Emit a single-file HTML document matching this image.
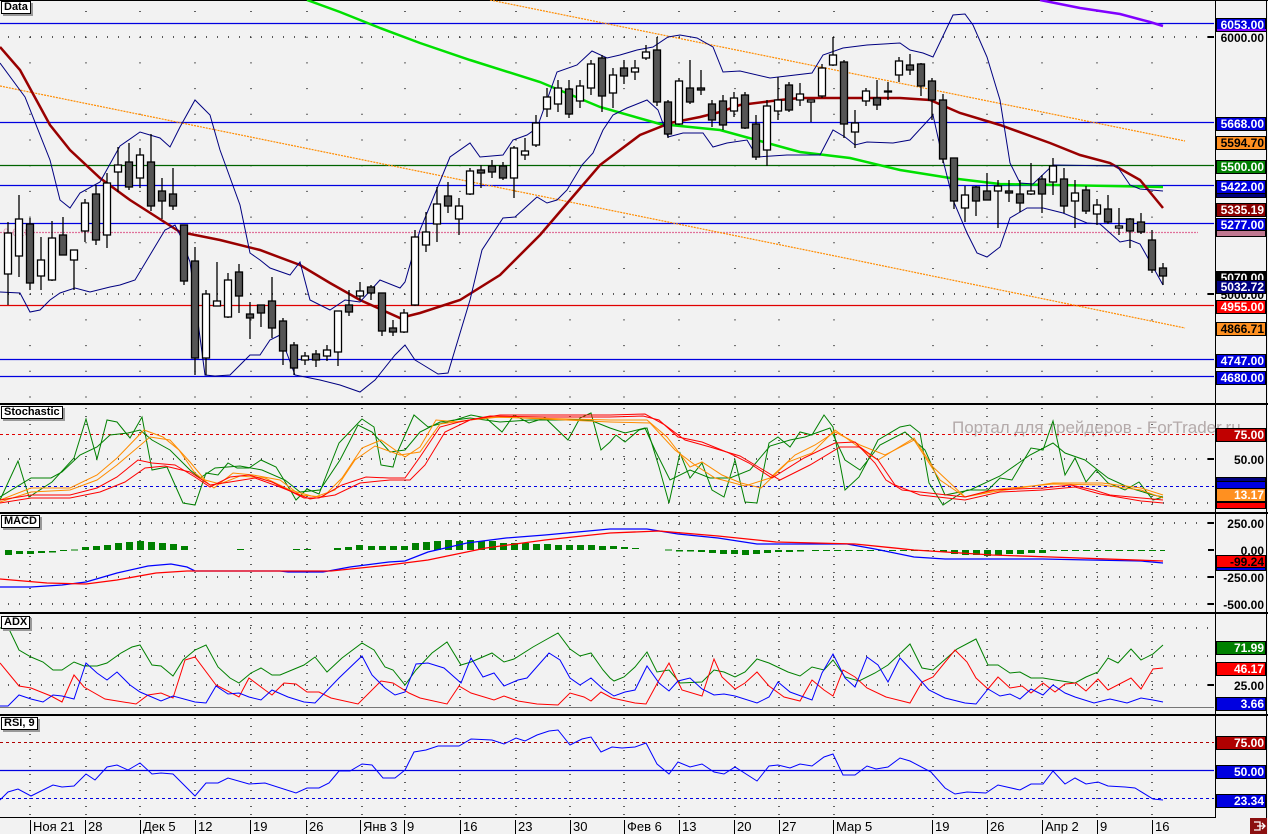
<!DOCTYPE html>
<html><head><meta charset="utf-8"><style>
body{margin:0;background:#f2f2f2;}
#w{position:relative;width:1268px;height:834px;overflow:hidden;background:#f2f2f2;font-family:"Liberation Sans",sans-serif;}
.t{position:absolute;left:1px;background:#fff;border:1px solid #000;box-shadow:2px 2px 0 #999;font:bold 11px "Liberation Sans",sans-serif;padding:0 2px;line-height:11px;}
.l{position:absolute;left:1216px;width:47px;height:12px;border:1px solid #000;font:bold 12px "Liberation Sans",sans-serif;line-height:12px;text-align:right;padding-right:1px;color:#fff;}
.n{border-color:transparent;color:#000;background:transparent;}
.d{position:absolute;top:820px;font:13px "Liberation Sans",sans-serif;line-height:14px;border-left:1px solid #000;padding-left:2px;}
</style></head><body><div id="w">
<svg width="1268" height="834" style="position:absolute;left:0;top:0">
<defs><clipPath id="cm"><rect x="0" y="0" width="1214" height="403"/></clipPath></defs>
<!-- frames -->
<line x1="0" y1="0.5" x2="1268" y2="0.5" stroke="#000"/>
<line x1="1215.5" y1="0" x2="1215.5" y2="818" stroke="#000"/>
<line x1="1266.5" y1="0" x2="1266.5" y2="818" stroke="#000"/>
<rect x="0" y="403" width="1268" height="2" fill="#000"/>
<rect x="0" y="512" width="1268" height="2" fill="#000"/>
<rect x="0" y="612" width="1268" height="2" fill="#000"/>
<rect x="0" y="714" width="1268" height="2" fill="#000"/>
<rect x="0" y="817" width="1216" height="1" fill="#000"/>
<!-- dotted grid -->
<g stroke="#000" stroke-width="1.2" stroke-dasharray="1 24.7">
<path d="M30 11V403M86 11V403M140 11V403M195 11V403M251 11V403M307 11V403M362 11V403M405 11V403M460 11V403M516 11V403M570 11V403M624 11V403M679 11V403M735 11V403M779 11V403M834 11V403M933 11V403M987 11V403M1042 11V403M1097 11V403M1152 11V403"/>
</g>
<g stroke="#000" stroke-width="1.2" stroke-dasharray="1 7">
<path d="M30 408V512M86 408V512M140 408V512M195 408V512M251 408V512M307 408V512M362 408V512M405 408V512M460 408V512M516 408V512M570 408V512M624 408V512M679 408V512M735 408V512M779 408V512M834 408V512M933 408V512M987 408V512M1042 408V512M1097 408V512M1152 408V512"/>
<path d="M30 516V612M86 516V612M140 516V612M195 516V612M251 516V612M307 516V612M362 516V612M405 516V612M460 516V612M516 516V612M570 516V612M624 516V612M679 516V612M735 516V612M779 516V612M834 516V612M933 516V612M987 516V612M1042 516V612M1097 516V612M1152 516V612"/>
<path d="M30 617V712M86 617V712M140 617V712M195 617V712M251 617V712M307 617V712M362 617V712M405 617V712M460 617V712M516 617V712M570 617V712M624 617V712M679 617V712M735 617V712M779 617V712M834 617V712M933 617V712M987 617V712M1042 617V712M1097 617V712M1152 617V712"/>
<path d="M30 718V817M86 718V817M140 718V817M195 718V817M251 718V817M307 718V817M362 718V817M405 718V817M460 718V817M516 718V817M570 718V817M624 718V817M679 718V817M735 718V817M779 718V817M834 718V817M933 718V817M987 718V817M1042 718V817M1097 718V817M1152 718V817"/>
</g>
<g stroke="#000" stroke-width="1.2" stroke-dasharray="1 10">
<path d="M8 37H1210M8 294H1210M8 459H1210M8 503H1210M8 523H1210M8 577H1210M8 604H1210M8 628H1210M8 656H1210M8 685H1210"/>
</g>
<g clip-path="url(#cm)">
<!-- horizontal levels -->
<g stroke-width="1.2" fill="none">
<path d="M0 23.5H1214M0 122.5H1214M0 185.5H1214M0 223.5H1214M0 359.5H1214M0 376.5H1214" stroke="#0000e0"/>
<path d="M0 165.5H1214" stroke="#006400"/>
<path d="M0 305.5H1214" stroke="#e00000"/>
<path d="M0 232.5H1198" stroke="#e0709a" stroke-dasharray="2 1"/>
<path d="M0 86L840 257L1185 328M490 0L1185 141" stroke="#ff8c00" stroke-dasharray="2 1"/>
</g>
<text x="3" y="236" font-size="11" fill="#e8a0b8" font-family="Liberation Sans">0.618</text>
<!-- MAs -->
<polyline fill="none" stroke="#8000ff" stroke-width="2.5" points="1040,0 1080,8 1120,14 1150,22 1163,26"/>
<polyline fill="none" stroke="#00e000" stroke-width="2.5" points="307,0 340,12 380,28 420,43 470,60 540,82 600,107 660,124 720,130 800,152 850,158 900,170 950,178 1000,184 1163,187"/>
<polyline fill="none" stroke="#990000" stroke-width="2.5" points="0,47 20,70 50,125 70,150 100,178 130,200 180,232 220,240 260,250 300,265 330,283 360,300 400,318 420,313 460,300 500,275 540,235 570,200 600,165 640,135 670,123 700,117 720,112 740,105 780,100 800,98 840,98 900,98 930,100 960,113 1000,125 1050,143 1080,155 1110,163 1140,180 1163,208"/>
<polyline fill="none" stroke="#000080" stroke-width="1" points="0,63 25,97 50,160 60,200 70,208 80,193 100,182 120,146 140,132 160,138 170,147 180,127 195,100 210,115 220,150 240,205 250,253 260,260 270,268 290,275 300,262 310,300 330,310 345,300 360,302 380,280 400,288 405,282 420,230 450,157 470,143 480,157 503,155 513,140 527,135 537,128 557,72 577,65 592,51 607,58 620,55 637,50 653,47 668,37 680,35 697,38 713,47 723,72 740,71 770,78 812,73 823,55 843,48 867,45 900,43 910,50 923,53 933,57 953,15 965,14 973,25 987,57 1000,100 1010,163 1020,183 1033,184 1053,165 1117,166 1130,185 1140,189 1163,191"/>
<polyline fill="none" stroke="#000080" stroke-width="1" points="0,292 20,293 30,312 40,310 50,300 60,293 75,288 90,292 110,287 120,285 135,280 150,255 165,230 175,225 180,235 190,262 205,375 215,376 230,375 240,365 250,355 260,355 270,340 280,335 295,375 320,380 340,385 360,392 375,380 395,355 405,345 415,360 420,363 438,374 448,373 470,300 482,250 503,218 515,217 537,197 547,203 557,200 567,190 582,165 593,153 603,130 613,115 627,108 647,100 658,110 668,137 683,133 703,133 713,147 727,143 747,140 757,157 787,155 820,155 833,130 845,137 855,145 867,142 893,143 910,140 933,115 943,160 953,200 967,233 977,253 987,257 1000,247 1010,218 1027,208 1043,208 1063,213 1087,223 1100,224 1120,242 1130,240 1140,244 1153,267 1163,285"/>
<!-- candles -->
<path stroke="#000" stroke-width="1.3" fill="none" d="M8 222V305M19 195V277M30 218V290M41 237V290M52 221V281M63 217V255M74 250V290M85 199V242M96 185V245M107 173V248M118 147V192M129 143V190M140 148V188M151 134V211M162 178V219M173 168V210M184 225V285M195 247V375M206 290V375M217 262V306M228 273V318M239 264V313M250 302V339M261 305V327M272 277V338M283 318V365M294 342V375M305 352V365M316 350V367M327 345V361M338 311V366M349 290V316M360 282V300M371 285V300M382 293V336M393 320V336M404 309V333M415 230V306M426 212V252M437 187V242M448 182V213M459 198V235M470 168V195M481 165V188M492 160V178M503 162V180M514 146V198M525 138V160M536 115V147M547 88V117M558 80V112M569 80V118M580 80V108M591 60V95M602 55V112M613 68V108M624 60V84M635 60V80M646 45V60M657 37V106M668 100V138M679 78V125M690 60V104M701 70V95M712 100V127M723 95V130M734 92V117M745 92V129M756 115V160M767 100V166M778 77V120M789 82V112M800 83V106M811 100V122M822 64V98M833 37V66M844 60V138M855 110V148M866 88V106M877 80V110M888 82V100M899 57V82M910 54V75M921 63V96M932 78V120M943 94V163M954 158V209M965 186V222M976 186V216M987 173V200M998 180V228M1009 180V202M1020 180V212M1031 163V195M1042 175V213M1053 158V195M1064 168V213M1075 180V228M1086 186V214M1097 199V225M1108 195V224M1119 208V235M1130 218V248M1141 213V234M1152 230V273M1163 263V285"/>
<g stroke="#000" stroke-width="1.3" fill="#fff">
<rect x="4.5" y="233" width="7" height="41"/><rect x="15.5" y="219" width="7" height="37"/><rect x="37.5" y="260" width="7" height="16"/><rect x="48.5" y="238" width="7" height="42"/><rect x="70.5" y="250" width="7" height="10"/><rect x="81.5" y="203" width="7" height="28"/><rect x="103.5" y="183" width="7" height="52"/><rect x="114.5" y="165" width="7" height="7"/><rect x="136.5" y="155" width="7" height="23"/><rect x="202.5" y="294" width="7" height="64"/><rect x="213.5" y="301" width="7" height="5"/><rect x="224.5" y="280" width="7" height="37"/><rect x="301.5" y="356" width="7" height="4"/><rect x="323.5" y="350" width="7" height="6"/><rect x="334.5" y="311" width="7" height="41"/><rect x="356.5" y="291" width="7" height="5"/><rect x="400.5" y="313" width="7" height="19"/><rect x="411.5" y="237" width="7" height="68"/><rect x="422.5" y="232" width="7" height="13"/><rect x="433.5" y="204" width="7" height="20"/><rect x="455.5" y="206" width="7" height="13"/><rect x="466.5" y="171" width="7" height="23"/><rect x="510.5" y="148" width="7" height="30"/><rect x="521.5" y="151" width="7" height="4"/><rect x="532.5" y="123" width="7" height="22"/><rect x="543.5" y="97" width="7" height="12"/><rect x="554.5" y="88" width="7" height="16"/><rect x="576.5" y="86" width="7" height="15"/><rect x="587.5" y="64" width="7" height="24"/><rect x="609.5" y="75" width="7" height="18"/><rect x="631.5" y="68" width="7" height="4"/><rect x="642.5" y="52" width="7" height="6"/><rect x="675.5" y="81" width="7" height="43"/><rect x="730.5" y="98" width="7" height="13"/><rect x="763.5" y="106" width="7" height="44"/><rect x="774.5" y="100" width="7" height="11"/><rect x="796.5" y="94" width="7" height="6"/><rect x="807.5" y="100" width="7" height="2"/><rect x="818.5" y="68" width="7" height="28"/><rect x="829.5" y="55" width="7" height="10"/><rect x="851.5" y="123" width="7" height="9"/><rect x="862.5" y="91" width="7" height="10"/><rect x="895.5" y="61" width="7" height="14"/><rect x="961.5" y="195" width="7" height="13"/><rect x="994.5" y="186" width="7" height="5"/><rect x="1027.5" y="191" width="7" height="3"/><rect x="1049.5" y="166" width="7" height="16"/><rect x="1071.5" y="193" width="7" height="8"/><rect x="1093.5" y="205" width="7" height="9"/><rect x="1115.5" y="226" width="7" height="2"/>
</g>
<g stroke="#000" stroke-width="1.3" fill="#555">
<rect x="26.5" y="224" width="7" height="59"/><rect x="59.5" y="235" width="7" height="20"/><rect x="92.5" y="194" width="7" height="46"/><rect x="125.5" y="162" width="7" height="25"/><rect x="147.5" y="162" width="7" height="44"/><rect x="158.5" y="191" width="7" height="10"/><rect x="169.5" y="194" width="7" height="12"/><rect x="180.5" y="225" width="7" height="56"/><rect x="191.5" y="261" width="7" height="97"/><rect x="235.5" y="272" width="7" height="24"/><rect x="246.5" y="314" width="7" height="4"/><rect x="257.5" y="305" width="7" height="8"/><rect x="268.5" y="301" width="7" height="27"/><rect x="279.5" y="321" width="7" height="30"/><rect x="290.5" y="345" width="7" height="23"/><rect x="312.5" y="354" width="7" height="6"/><rect x="345.5" y="305" width="7" height="7"/><rect x="367.5" y="287" width="7" height="6"/><rect x="378.5" y="293" width="7" height="38"/><rect x="389.5" y="328" width="7" height="4"/><rect x="444.5" y="196" width="7" height="10"/><rect x="477.5" y="170" width="7" height="3"/><rect x="488.5" y="166" width="7" height="6"/><rect x="499.5" y="166" width="7" height="12"/><rect x="565.5" y="89" width="7" height="25"/><rect x="598.5" y="58" width="7" height="38"/><rect x="620.5" y="68" width="7" height="8"/><rect x="653.5" y="50" width="7" height="52"/><rect x="664.5" y="102" width="7" height="32"/><rect x="686.5" y="88" width="7" height="14"/><rect x="697.5" y="88" width="7" height="2"/><rect x="708.5" y="104" width="7" height="16"/><rect x="719.5" y="101" width="7" height="24"/><rect x="741.5" y="95" width="7" height="33"/><rect x="752.5" y="124" width="7" height="33"/><rect x="785.5" y="85" width="7" height="25"/><rect x="840.5" y="62" width="7" height="62"/><rect x="873.5" y="98" width="7" height="7"/><rect x="884.5" y="91" width="7" height="1"/><rect x="906.5" y="65" width="7" height="5"/><rect x="917.5" y="64" width="7" height="22"/><rect x="928.5" y="81" width="7" height="19"/><rect x="939.5" y="100" width="7" height="59"/><rect x="950.5" y="158" width="7" height="43"/><rect x="972.5" y="187" width="7" height="14"/><rect x="983.5" y="191" width="7" height="9"/><rect x="1005.5" y="191" width="7" height="2"/><rect x="1016.5" y="194" width="7" height="9"/><rect x="1038.5" y="179" width="7" height="15"/><rect x="1060.5" y="179" width="7" height="27"/><rect x="1082.5" y="190" width="7" height="21"/><rect x="1104.5" y="209" width="7" height="13"/><rect x="1126.5" y="219" width="7" height="12"/><rect x="1137.5" y="222" width="7" height="10"/><rect x="1148.5" y="240" width="7" height="30"/><rect x="1159.5" y="268" width="7" height="8"/>
</g>
</g>
<!-- Stochastic -->
<text x="952" y="433" font-size="17" fill="#b4aaaa" font-family="Liberation Sans">Портал для трейдеров - ForTrader.ru</text>
<path d="M0 434.5H1214" stroke="#e00000" stroke-dasharray="3 3"/>
<path d="M0 486.5H1214" stroke="#0000e0" stroke-dasharray="3 3"/>
<g fill="none" stroke-width="1">
<polyline stroke="#008000" points="0,500 18,461 29,497 52,482 74,458 86,419 97,459 107,420 117,422 130,438 142,417 152,470 167,467 183,503 195,505 206,473 218,475 228,463 237,468 249,468 261,460 276,467 292,493 296,500 307,489 319,494 339,443 362,419 374,427 381,465 393,467 397,453 414,415 428,427 455,420 471,415 486,418 502,432 514,415 529,423 545,418 568,440 580,418 591,413 601,450 610,442 616,435 625,442 639,430 647,428 659,467 669,503 680,453 690,478 702,463 712,490 724,497 735,460 745,502 757,503 769,443 778,437 790,447 800,432 812,435 824,415 833,427 845,490 859,477 867,462 878,440 900,427 910,425 920,433 929,483 943,505 955,497 967,490 988,490 1000,478 1012,480 1031,448 1043,450 1053,421 1065,475 1075,458 1086,482 1096,470 1108,483 1125,490 1139,482 1153,500 1163,497"/>
<polyline stroke="#008000" points="0,497 31,478 51,478 62,472 80,455 97,447 110,435 128,433 140,430 152,440 170,450 190,470 200,478 215,468 240,466 262,470 285,480 300,492 320,490 340,460 358,425 372,432 390,452 405,450 420,432 440,422 470,418 500,422 530,420 560,420 590,420 610,428 625,433 645,428 655,450 670,480 690,470 710,478 730,478 750,470 770,446 790,440 805,437 830,428 845,460 860,470 880,445 905,432 925,450 945,495 970,490 1000,476 1030,455 1053,443 1065,453 1085,460 1108,478 1130,488 1153,495 1163,497"/>
<polyline stroke="#ff8c00" points="0,500 31,488 70,488 97,475 117,458 144,430 163,437 179,450 195,473 214,488 233,473 253,475 280,480 300,495 323,497 342,478 362,448 381,440 405,457 420,447 436,420 459,422 486,417 610,420 647,420 667,437 690,467 702,462 722,475 741,483 761,488 788,462 812,453 835,430 867,453 878,460 914,438 933,467 965,497 992,492 1053,483 1102,483 1141,488 1163,495"/>
<polyline stroke="#ff8c00" points="0,502 31,492 70,490 97,480 117,465 150,437 170,440 190,462 205,480 220,484 240,476 265,478 290,490 315,497 335,490 355,460 375,446 400,455 420,452 440,424 470,420 500,417 610,422 650,423 675,450 695,465 715,478 745,486 770,478 795,455 815,445 835,432 860,445 885,455 914,440 940,480 965,497 1000,489 1053,484 1102,485 1141,490 1163,498"/>
<polyline stroke="#ff0000" points="0,500 31,495 70,495 97,488 117,477 138,460 152,463 175,465 195,477 210,487 230,477 249,475 272,482 304,498 319,498 342,485 366,477 389,478 405,478 420,457 440,427 459,422 490,416 545,417 610,417 643,416 659,420 678,437 702,442 729,453 749,463 772,478 804,458 835,443 855,442 875,463 886,480 902,490 965,497 992,490 1043,488 1071,485 1094,490 1110,495 1141,498 1163,500"/>
<polyline stroke="#ff0000" points="0,503 31,498 70,498 100,492 125,482 145,468 165,466 190,472 210,485 230,482 255,478 280,487 310,499 335,495 360,483 390,480 410,480 425,465 445,432 470,420 500,415 610,415 645,414 665,425 685,440 710,447 740,456 760,468 780,480 810,465 840,447 860,447 878,460 895,485 920,495 965,500 1000,492 1043,490 1075,487 1100,494 1141,501 1163,503"/>
</g>
<!-- MACD -->
<g fill="#008000">
<rect x="5" y="550" width="7" height="5"/><rect x="16" y="551" width="7" height="3"/><rect x="27" y="551" width="7" height="3"/><rect x="38" y="551" width="7" height="2"/><rect x="49" y="551" width="7" height="1.5"/><rect x="60" y="550" width="7" height="1"/><rect x="71" y="549.5" width="7" height="1"/><rect x="82" y="547" width="7" height="3"/><rect x="93" y="546" width="7" height="4"/><rect x="104" y="545" width="7" height="5"/><rect x="115" y="543" width="7" height="7"/><rect x="126" y="542" width="7" height="8"/><rect x="137" y="541" width="7" height="9"/><rect x="148" y="542" width="7" height="8"/><rect x="159" y="543" width="7" height="7"/><rect x="170" y="544" width="7" height="6"/><rect x="181" y="546" width="7" height="4"/><rect x="237" y="549" width="7" height="1"/><rect x="293" y="549" width="7" height="1"/><rect x="304" y="549" width="7" height="1"/><rect x="334" y="548" width="7" height="2"/><rect x="345" y="547" width="7" height="3"/><rect x="356" y="545" width="7" height="5"/><rect x="368" y="546" width="7" height="4"/><rect x="379" y="546" width="7" height="4"/><rect x="390" y="546" width="7" height="4"/><rect x="401" y="546" width="7" height="4"/><rect x="412" y="543" width="7" height="7"/><rect x="423" y="542" width="7" height="8"/><rect x="434" y="541" width="7" height="9"/><rect x="445" y="540" width="7" height="10"/><rect x="456" y="541" width="7" height="9"/><rect x="467" y="540" width="7" height="10"/><rect x="478" y="541" width="7" height="9"/><rect x="489" y="541" width="7" height="9"/><rect x="500" y="543" width="7" height="7"/><rect x="511" y="543" width="7" height="7"/><rect x="522" y="543" width="7" height="7"/><rect x="533" y="544" width="7" height="6"/><rect x="544" y="544" width="7" height="6"/><rect x="555" y="545" width="7" height="5"/><rect x="566" y="545" width="7" height="5"/><rect x="577" y="545" width="7" height="5"/><rect x="588" y="545" width="7" height="5"/><rect x="599" y="546" width="7" height="4"/><rect x="610" y="546" width="7" height="3"/><rect x="621" y="547" width="7" height="2"/><rect x="632" y="548" width="7" height="1"/><rect x="665" y="549.5" width="7" height="1"/><rect x="676" y="550" width="7" height="1.5"/><rect x="687" y="550" width="7" height="1.5"/><rect x="698" y="550" width="7" height="2"/><rect x="709" y="550" width="7" height="3"/><rect x="720" y="550" width="7" height="4"/><rect x="731" y="550" width="7" height="4"/><rect x="742" y="550" width="7" height="5"/><rect x="753" y="550" width="7" height="4"/><rect x="764" y="550" width="7" height="3"/><rect x="775" y="550" width="7" height="2"/><rect x="786" y="550" width="7" height="2"/><rect x="797" y="550" width="7" height="1.5"/><rect x="940" y="550" width="7" height="2"/><rect x="951" y="550" width="7" height="4"/><rect x="962" y="550" width="7" height="5"/><rect x="973" y="550" width="7" height="5"/><rect x="984" y="550" width="7" height="6"/><rect x="995" y="550" width="7" height="5"/><rect x="1006" y="550" width="7" height="4"/><rect x="1017" y="550" width="7" height="4"/><rect x="1028" y="550" width="7" height="3"/><rect x="1039" y="550" width="7" height="3"/>
</g>
<path d="M812 550.5H935M1050 550.5H1165" stroke="#008000" stroke-dasharray="7 4"/>
<g fill="none" stroke-width="1.3">
<polyline stroke="#0000ff" points="0,587 31,587 62,585 86,582 117,573 148,566 171,564 187,567 195,571 280,571 288,572 323,572 350,567 389,562 405,561 428,552 467,543 506,538 545,535 610,529 647,529 678,534 718,538 757,544 847,544 875,549 914,557 945,559 1043,559 1090,560 1141,561 1163,563"/>
<polyline stroke="#ff0000" points="0,579 47,583 86,584 117,580 156,573 187,571 331,571 389,565 428,560 486,548 545,540 610,533 659,531 718,536 776,542 855,544 914,550 992,555 1051,557 1163,561"/>
</g>
<!-- ADX -->
<path d="M0 707.5H1214" stroke="#777"/>
<g fill="none" stroke-width="1">
<polyline stroke="#008000" points="0,628 8,627 19,650 31,657 43,662 53,670 62,670 74,662 84,666 97,666 107,663 121,653 132,647 140,645 152,665 161,666 173,676 183,660 195,650 206,645 218,667 230,678 239,683 251,673 261,668 272,675 280,675 304,665 315,657 327,672 342,658 362,643 374,650 385,667 393,670 405,685 416,670 432,653 447,642 461,665 471,662 492,653 504,662 514,659 533,647 549,638 558,633 570,649 580,656 591,653 603,670 610,678 614,681 624,677 635,667 647,652 657,672 669,670 680,683 702,682 714,670 724,672 735,677 745,672 757,659 769,663 788,672 800,676 812,667 824,670 833,660 845,677 859,681 875,673 888,665 910,644 922,668 933,670 957,649 976,639 988,665 998,665 1010,673 1020,672 1031,678 1043,678 1055,680 1075,683 1086,677 1098,672 1108,658 1118,663 1131,649 1141,660 1153,654 1163,645"/>
<polyline stroke="#ff0000" points="0,663 19,686 31,688 51,696 62,702 74,675 84,687 105,699 136,704 148,695 161,693 173,698 185,660 195,657 216,685 239,697 249,678 265,690 272,695 284,683 296,684 307,692 319,692 331,698 358,704 381,681 393,683 409,693 420,698 447,704 459,686 471,693 494,700 504,696 518,701 537,704 558,705 570,693 584,697 591,701 601,692 612,698 635,703 646,704 659,680 669,663 682,690 702,696 714,659 722,677 735,689 745,683 757,672 769,686 784,697 800,701 812,680 824,690 833,696 843,670 855,677 867,688 886,697 910,703 922,682 933,677 955,650 967,662 976,678 988,689 998,677 1010,688 1022,686 1031,693 1043,683 1055,692 1065,684 1076,683 1086,691 1098,679 1108,690 1131,678 1141,689 1153,669 1163,668"/>
<polyline stroke="#0000ff" points="0,706 8,706 19,695 31,699 43,702 53,695 62,696 74,699 86,663 97,673 107,680 117,672 130,685 140,692 161,701 173,696 195,702 206,703 216,686 228,694 239,693 249,697 261,700 272,690 288,697 304,702 315,703 339,678 362,656 372,675 385,688 395,695 405,692 416,664 428,663 444,668 461,683 471,658 483,677 494,673 504,686 518,680 527,678 549,653 560,660 570,678 580,685 591,678 603,689 614,696 625,692 635,690 647,666 659,683 669,691 678,681 690,678 702,689 714,695 724,694 735,696 757,703 769,697 778,682 790,692 812,700 822,673 833,654 845,678 855,687 867,657 878,665 888,682 900,658 914,673 929,690 945,698 965,703 976,704 988,689 1000,696 1010,694 1020,699 1031,689 1043,695 1053,685 1065,693 1075,697 1094,703 1110,699 1127,703 1141,698 1153,700 1163,702"/>
</g>
<!-- RSI -->
<path d="M0 742.5H1214" stroke="#b00000" stroke-dasharray="3 3"/>
<path d="M0 770.5H1214" stroke="#0000e0" stroke-width="1.3"/>
<path d="M0 798.5H1214" stroke="#0000e0" stroke-dasharray="3 3"/>
<polyline fill="none" stroke="#0000ff" points="0,800 8,792 18,789 31,796 53,785 62,787 74,786 86,774 95,780 107,767 117,765 128,770 140,763 152,774 161,773 173,774 195,796 206,783 218,783 228,778 249,784 265,783 296,793 307,788 319,788 329,783 339,771 350,771 362,764 372,765 383,778 395,778 405,770 414,752 426,750 438,746 459,746 471,739 492,740 504,744 516,738 525,741 537,735 549,731 558,730 570,745 582,739 591,737 601,752 612,747 622,748 635,747 646,743 657,764 669,774 678,762 690,767 702,764 714,772 724,774 735,767 757,781 769,766 778,765 790,768 800,764 812,766 824,757 833,754 843,775 855,775 867,766 876,769 888,767 900,758 910,761 931,772 945,788 955,794 967,792 986,793 998,785 1020,790 1031,784 1043,784 1053,771 1065,784 1075,778 1086,784 1098,782 1108,786 1125,787 1135,788 1153,799 1163,800"/>
<!-- right tick marks -->
<g stroke="#000" stroke-width="2"><path d="M1208 37H1214M1208 294H1214M1208 459H1214M1208 523H1214M1208 550H1214M1208 577H1214M1208 604H1214M1208 685H1214"/></g>
<!-- bottom right button -->
<rect x="1250" y="818" width="17" height="16" fill="#8b1010"/>
<path d="M1254 822h6v8h-6M1257 826h8M1262 823l3 3-3 3" stroke="#fff" fill="none" stroke-width="1.3"/>
</svg>
<div class="t" style="top:1px">Data</div>
<div class="t" style="top:406px">Stochastic</div>
<div class="t" style="top:515px">MACD</div>
<div class="t" style="top:616px">ADX</div>
<div class="t" style="top:717px">RSI, 9</div>
<!-- right labels -->
<div class="l" style="top:18px;background:#0000e0">6053.00</div>
<div class="l" style="top:29px;height:2px;background:#8000ff;border:0;left:1217px;width:48px"></div>
<div class="l n" style="top:31px">6000.00</div>
<div class="l" style="top:117px;background:#0000e0">5668.00</div>
<div class="l" style="top:136px;background:#ff9020;color:#000">5594.70</div>
<div class="l" style="top:160px;background:#008000">5500.00</div>
<div class="l" style="top:191px;height:5px;background:#000080"></div>
<div class="l" style="top:180px;background:#0000e0">5422.00</div>
<div class="l" style="top:203px;background:#8b0000">5335.19</div>
<div class="l" style="top:218px;background:#0000e0">5277.00</div>
<div class="l" style="top:230px;height:5px;background:#c07890"></div>
<div class="l n" style="top:288px">5000.00</div>
<div class="l" style="top:271px;background:#000">5070.00</div>
<div class="l" style="top:280px;background:#000080">5032.72</div>
<div class="l" style="top:300px;background:#ff0000">4955.00</div>
<div class="l" style="top:322px;background:#ff9020;color:#000">4866.71</div>
<div class="l" style="top:354px;background:#0000e0">4747.00</div>
<div class="l" style="top:371px;background:#0000e0">4680.00</div>
<div class="l" style="top:428px;background:#c00000">75.00</div>
<div class="l n" style="top:453px">50.00</div>
<div class="l" style="top:477px;height:6px;background:#000080"></div>
<div class="l" style="top:481px;height:6px;background:#0000e0"></div>
<div class="l" style="top:488px;background:#ff9020">13.17</div>
<div class="l" style="top:502px;height:5px;background:#ff0000"></div>
<div class="l n" style="top:517px">250.00</div>
<div class="l n" style="top:544px">0.00</div>
<div class="l" style="top:555px;background:#ff0000;color:#000">-99.24</div>
<div class="l" style="top:567px;height:2px;background:#0000e0"></div>
<div class="l n" style="top:571px">-250.00</div>
<div class="l n" style="top:598px">-500.00</div>
<div class="l" style="top:641px;background:#008000">71.99</div>
<div class="l" style="top:662px;background:#ff0000">46.17</div>
<div class="l n" style="top:679px">25.00</div>
<div class="l" style="top:697px;background:#0000e0">3.66</div>
<div class="l" style="top:736px;background:#b00000">75.00</div>
<div class="l" style="top:765px;background:#0000e0">50.00</div>
<div class="l" style="top:794px;background:#0000e0">23.34</div>
<!-- date axis -->
<div class="d" style="left:30px">Ноя 21</div>
<div class="d" style="left:85px">28</div>
<div class="d" style="left:140px">Дек 5</div>
<div class="d" style="left:195px">12</div>
<div class="d" style="left:250px">19</div>
<div class="d" style="left:306px">26</div>
<div class="d" style="left:360px">Янв 3</div>
<div class="d" style="left:404px">9</div>
<div class="d" style="left:460px">16</div>
<div class="d" style="left:515px">23</div>
<div class="d" style="left:570px">30</div>
<div class="d" style="left:624px">Фев 6</div>
<div class="d" style="left:679px">13</div>
<div class="d" style="left:734px">20</div>
<div class="d" style="left:779px">27</div>
<div class="d" style="left:833px">Мар 5</div>
<div class="d" style="left:932px">19</div>
<div class="d" style="left:987px">26</div>
<div class="d" style="left:1042px">Апр 2</div>
<div class="d" style="left:1097px">9</div>
<div class="d" style="left:1152px">16</div>
</div></body></html>
